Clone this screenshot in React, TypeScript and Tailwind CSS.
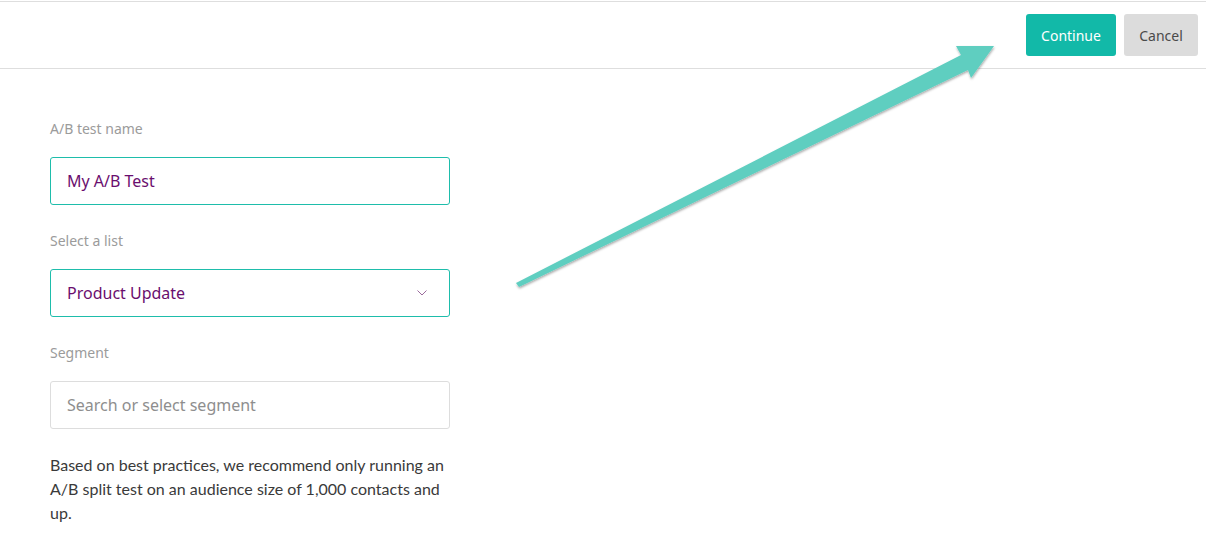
import React from "react";

export default function App() {
  return (
    <div className="relative w-[1206px] h-[537px] bg-white overflow-hidden" style={{ fontFamily: '"Noto Sans", "Open Sans", sans-serif' }}>
      <header className="mt-px h-[68px] border-t border-b border-[#dedede] flex items-center justify-end gap-2 pr-2">
        <button className="h-[42px] w-[90px] rounded-[3px] bg-[#12b9a8] text-white text-[14px] font-['Noto_Sans',sans-serif]">Continue</button>
        <button className="h-[42px] w-[74px] rounded-[3px] bg-[#dcdcdc] text-[#4a4a4a] text-[14px]">Cancel</button>
      </header>
      <main className="pl-[50px] pt-[50px] w-[450px] flex flex-col">
        <label className="text-[14px] leading-[20px] text-[#9b9b9b]">A/B test name</label>
        <div className="mt-[18px] h-[48px] rounded-[3px] border border-[#1ebdab] flex items-center px-4 text-[16px] text-[#6a0e6e]">My A/B Test</div>
        <label className="mt-[26px] text-[14px] leading-[20px] text-[#9b9b9b]">Select a list</label>
        <div className="mt-[18px] h-[48px] rounded-[3px] border border-[#1ebdab] flex items-center justify-between pl-4 pr-[22px] text-[16px] text-[#6a0e6e]">
          <span>Product Update</span>
          <svg width="10" height="6" viewBox="0 0 10 6" fill="none" stroke="#9a6a9c" strokeWidth="1"><path d="M0.5 0.5 L5 5 L9.5 0.5" /></svg>
        </div>
        <label className="mt-[26px] text-[14px] leading-[20px] text-[#9b9b9b]">Segment</label>
        <div className="mt-[18px] h-[48px] rounded-[3px] border border-[#dddddd] flex items-center px-4 text-[16px] text-[#8e8e8e]">Search or select segment</div>
        <p className="mt-[24px] text-[16px] leading-[24px] text-[#3a3a3a] font-['Lato',sans-serif]">
          Based on best practices, we recommend only running an A/B split test on an audience size of 1,000 contacts and up.
        </p>
      </main>
      <svg className="absolute left-0 top-0 pointer-events-none" width="1206" height="537">
        <defs>
          <filter id="sh" x="-10%" y="-10%" width="120%" height="130%">
            <feDropShadow dx="0.5" dy="1.5" stdDeviation="1" floodColor="#000" floodOpacity="0.35" />
          </filter>
        </defs>
        <path d="M516 283 L961 55 L956 46 L994 46 L971 78 L968 70 L519 287 Z" fill="#5ecec0" filter="url(#sh)" />
      </svg>
    </div>
  );
}
